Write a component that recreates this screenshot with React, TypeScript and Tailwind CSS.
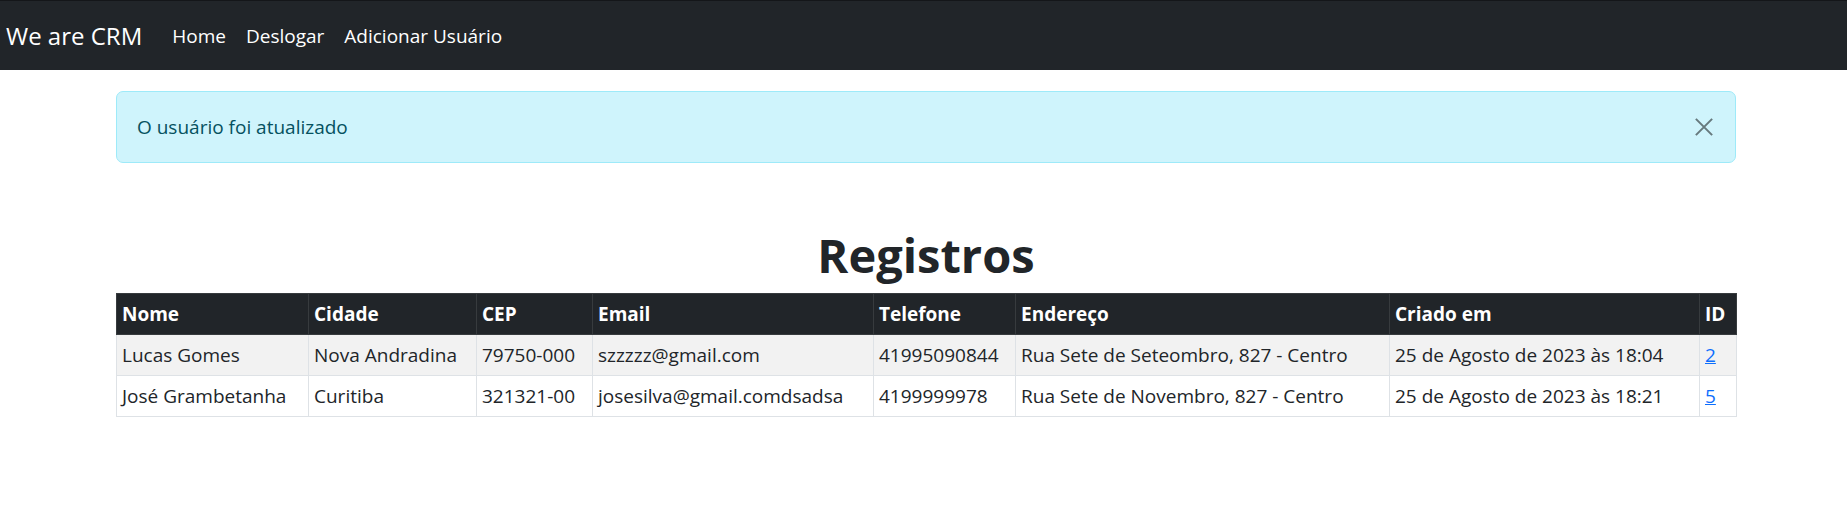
const rows = [
  {
    nome: "Lucas Gomes",
    cidade: "Nova Andradina",
    cep: "79750-000",
    email: "szzzzz@gmail.com",
    telefone: "41995090844",
    endereco: "Rua Sete de Seteombro, 827 - Centro",
    criado: "25 de Agosto de 2023 às 18:04",
    id: 2,
  },
  {
    nome: "José Grambetanha",
    cidade: "Curitiba",
    cep: "321321-00",
    email: "josesilva@gmail.comdsadsa",
    telefone: "4199999978",
    endereco: "Rua Sete de Novembro, 827 - Centro",
    criado: "25 de Agosto de 2023 às 18:21",
    id: 5,
  },
];

const columns = [
  { label: "Nome", width: "w-[192px]" },
  { label: "Cidade", width: "w-[168px]" },
  { label: "CEP", width: "w-[116px]" },
  { label: "Email", width: "w-[281px]" },
  { label: "Telefone", width: "w-[142px]" },
  { label: "Endereço", width: "w-[374px]" },
  { label: "Criado em", width: "w-[310px]" },
  { label: "ID", width: "w-[37px]" },
];

export default function App() {
  return (
    <div className="min-h-screen bg-white font-['Open_Sans','Noto_Sans',sans-serif] text-[#212529]">
      {/* Navbar */}
      <nav className="flex h-[70px] items-center border-t border-[#141619] bg-[#212529] pl-[6px]">
        <a href="#" className="mr-[20px] text-[24px] leading-[38px] text-white">
          We are CRM
        </a>
        <ul className="flex items-center">
          {["Home", "Deslogar", "Adicionar Usuário"].map((item) => (
            <li key={item}>
              <a href="#" className="block px-[10px] text-[19px] leading-[30px] text-white">
                {item}
              </a>
            </li>
          ))}
        </ul>
      </nav>

      <div className="pl-[116px] pr-[111px]">
        {/* Alert */}
        <div className="mt-[21px] flex h-[72px] items-center justify-between rounded-[7px] border border-[#9eeaf9] bg-[#cff4fc] pl-[20px] pr-[21px] text-[#055160]">
          <span className="text-[19px] leading-[30px]">O usuário foi atualizado</span>
          <button type="button" aria-label="Close" className="flex h-[20px] w-[20px] items-center justify-center opacity-50">
            <svg viewBox="0 0 16 16" className="h-[20px] w-[20px]" fill="none" stroke="#000" strokeWidth="1.6">
              <path d="M1.5 1.5l13 13M14.5 1.5l-13 13" />
            </svg>
          </button>
        </div>

        <h1 className="mt-[62px] mb-[8px] text-center text-[47px] font-bold leading-[60px]">
          Registros
        </h1>

        {/* Table */}
        <table className="w-full table-fixed border-collapse text-left text-[19px] leading-[30px]">
          <colgroup>
            {columns.map((c) => (
              <col key={c.label} className={c.width} />
            ))}
          </colgroup>
          <thead>
            <tr className="bg-[#212529] text-white">
              {columns.map((c) => (
                <th key={c.label} className="border border-[#373b3e] px-[5px] py-[5px] font-bold whitespace-nowrap">
                  {c.label}
                </th>
              ))}
            </tr>
          </thead>
          <tbody>
            {rows.map((r, i) => (
              <tr key={r.id} className={i % 2 === 0 ? "bg-[#f2f2f2]" : "bg-white"}>
                <td className="border border-[#dee2e6] px-[5px] py-[5px] whitespace-nowrap">{r.nome}</td>
                <td className="border border-[#dee2e6] px-[5px] py-[5px] whitespace-nowrap">{r.cidade}</td>
                <td className="border border-[#dee2e6] px-[5px] py-[5px] whitespace-nowrap">{r.cep}</td>
                <td className="border border-[#dee2e6] px-[5px] py-[5px] whitespace-nowrap">{r.email}</td>
                <td className="border border-[#dee2e6] px-[5px] py-[5px] whitespace-nowrap">{r.telefone}</td>
                <td className="border border-[#dee2e6] px-[5px] py-[5px] whitespace-nowrap">{r.endereco}</td>
                <td className="border border-[#dee2e6] px-[5px] py-[5px] whitespace-nowrap">{r.criado}</td>
                <td className="border border-[#dee2e6] px-[5px] py-[5px]">
                  <a href="#" className="text-[#0d6efd] underline">
                    {r.id}
                  </a>
                </td>
              </tr>
            ))}
          </tbody>
        </table>
      </div>
    </div>
  );
}
